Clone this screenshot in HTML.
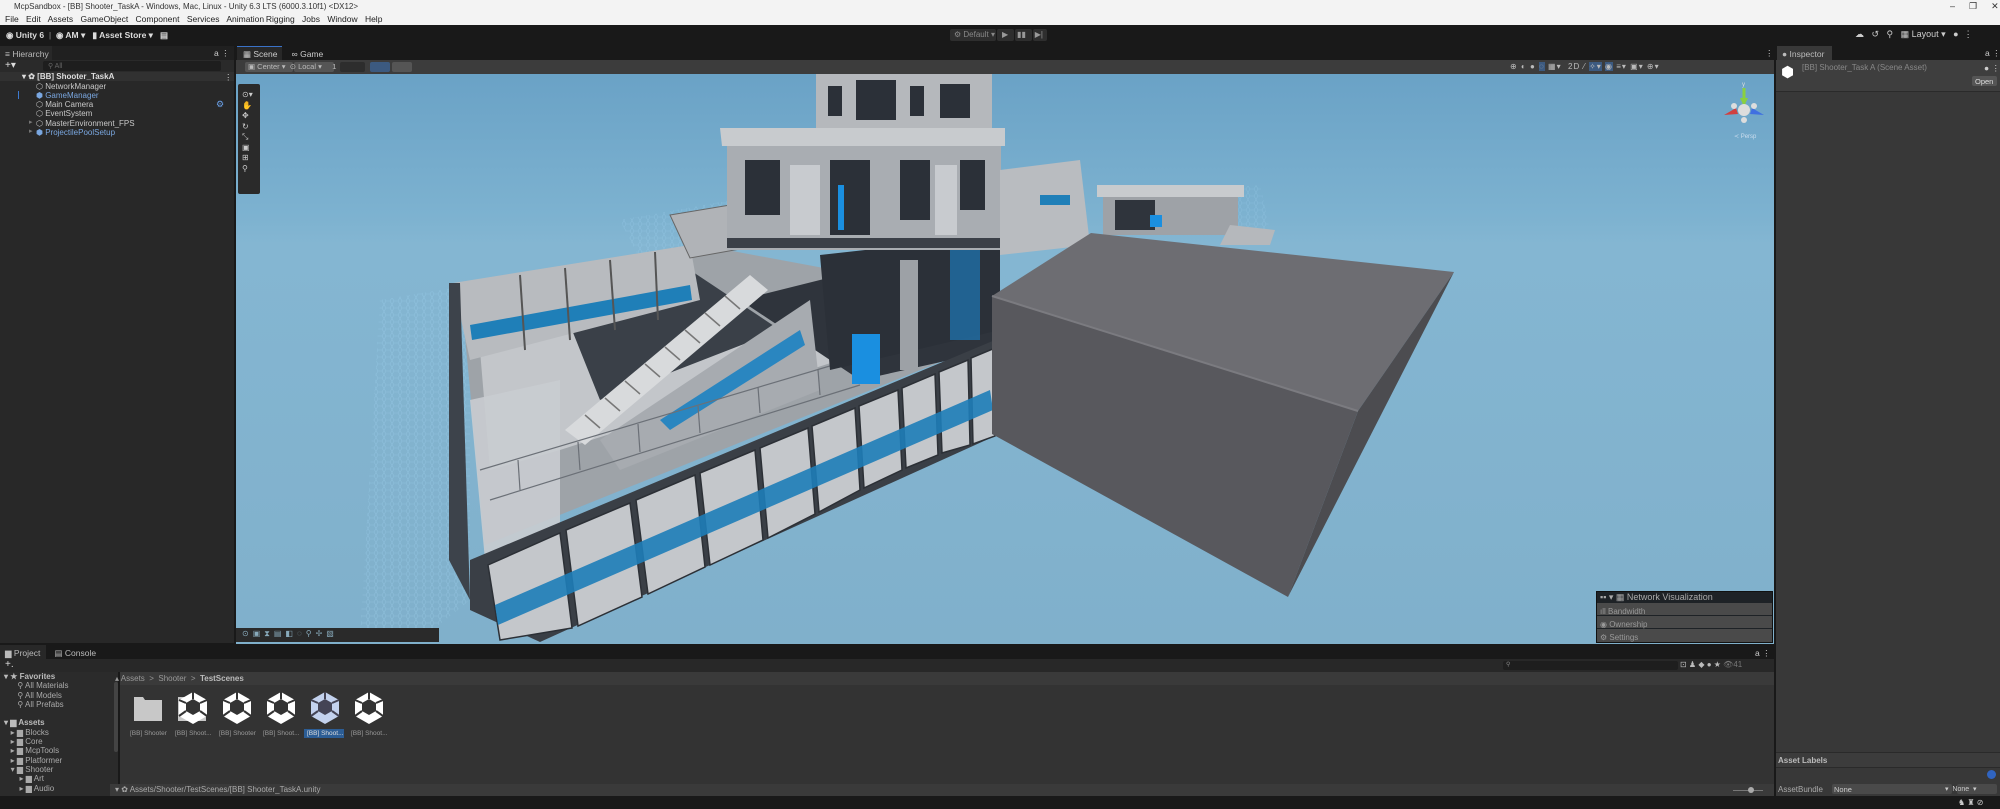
<!DOCTYPE html>
<html><head><meta charset="utf-8"><style>
*{margin:0;padding:0;box-sizing:border-box}
body{width:2000px;height:809px;overflow:hidden;background:#191919;font-family:"Liberation Sans",sans-serif;font-size:8.5px;color:#c4c4c4;position:relative}
.a{position:absolute}
.t{white-space:nowrap}
.btn{position:absolute;background:#3a3a3a;border-radius:2px}
</style></head><body>
<!-- title + menu -->
<div class="a" style="left:0;top:0;width:2000px;height:25px;background:#f3f3f3"></div>
<div class="a t" style="left:14px;top:2px;color:#333;font-size:8px">McpSandbox - [BB] Shooter_TaskA - Windows, Mac, Linux - Unity 6.3 LTS (6000.3.10f1) &lt;DX12&gt;</div>
<div class="a t" style="left:1950px;top:1px;color:#333;font-size:9px;letter-spacing:14px">–❐✕</div>
<div class="a t" style="left:5px;top:14px;color:#222;font-size:8.5px;word-spacing:5px">File Edit Assets GameObject Component Services <span>Animation&#8239;Rigging</span> Jobs Window Help</div>
<!-- main toolbar -->
<div class="a t" style="left:6px;top:30px;color:#ddd;font-weight:bold">◉ Unity 6 &nbsp;<span style="color:#666">|</span>&nbsp; ◉ AM ▾ &nbsp; ▮ Asset Store ▾ &nbsp; ▤</div>
<div class="btn" style="left:950px;top:29px;width:46px;height:12px;background:#2e2e2e"></div>
<div class="a t" style="left:954px;top:30px;color:#888;font-size:8px">⚙ Default ▾</div>
<div class="btn" style="left:997px;top:29px;width:17px;height:12px;background:#2e2e2e"></div>
<div class="btn" style="left:1015px;top:29px;width:17px;height:12px;background:#2e2e2e"></div>
<div class="btn" style="left:1033px;top:29px;width:14px;height:12px;background:#2e2e2e"></div>
<div class="a t" style="left:1002px;top:30px;color:#999;font-size:8px">▶ &nbsp;&nbsp; ▮▮ &nbsp;&nbsp; ▶|</div>
<div class="a t" style="left:1855px;top:29px;color:#ccc;font-size:9px">☁ &nbsp; ↺ &nbsp; ⚲ &nbsp; ▦ Layout ▾ &nbsp; ● &nbsp;⋮</div>
<!-- hierarchy -->
<div class="a" style="left:0;top:46px;width:234px;height:597px;background:#282828"></div>
<div class="a" style="left:0;top:46px;width:234px;height:14px;background:#202020"></div>
<div class="a" style="left:0;top:46px;width:52px;height:14px;background:#282828"></div>
<div class="a t" style="left:5px;top:49px;color:#bbb">≡ Hierarchy</div>
<div class="a t" style="left:214px;top:48px;color:#ccc">a ⋮</div>
<div class="a" style="left:0;top:60px;width:234px;height:12px;background:#2a2a2a"></div>
<div class="a t" style="left:5px;top:60px;color:#ddd;font-size:10px">+▾</div>
<div class="a" style="left:43px;top:61px;width:178px;height:10px;background:#1e1e1e;border-radius:2px"></div>
<div class="a t" style="left:48px;top:62px;color:#666;font-size:7px">⚲ All</div>
<div class="a" style="left:0;top:72px;width:234px;height:9px;background:#313131"></div>
<div class="a t" style="left:22px;top:72px;color:#ddd;font-weight:bold;font-size:8px">▾ ✿ [BB] Shooter_TaskA</div>
<div class="a t" style="left:224px;top:72px;color:#ccc">⋮</div>
<div class="a t" style="left:36px;top:81.5px;line-height:9.3px;font-size:8px;color:#c8c8c8">
⬡ NetworkManager<br><span style="color:#7aa7e0">⬢ GameManager</span><br>⬡ Main Camera<br>⬡ EventSystem<br>⬡ MasterEnvironment_FPS<br><span style="color:#7aa7e0">⬢ ProjectilePoolSetup</span></div>
<div class="a t" style="left:29px;top:118px;color:#777;font-size:7px;line-height:9.3px">▸<br>▸</div>
<div class="a" style="left:18px;top:91px;width:1px;height:8px;background:#3d7ad0"></div>
<div class="a t" style="left:216px;top:99px;color:#6aa0e8;font-size:9px">⚙</div>
<!-- scene panel -->
<div class="a" style="left:236px;top:46px;width:1538px;height:14px;background:#191919"></div>
<div class="a" style="left:237px;top:46px;width:45px;height:14px;background:#282828;border-top:1px solid #3a72c8"></div>
<div class="a t" style="left:243px;top:49px;color:#ccc">▦ Scene &nbsp;&nbsp;&nbsp;&nbsp; <span>∞ Game</span></div>
<div class="a t" style="left:1765px;top:48px;color:#ccc">⋮</div>
<div class="a" style="left:236px;top:60px;width:1538px;height:14px;background:#3c3c3c"></div>
<div class="btn" style="left:245px;top:62px;width:48px;height:10px;background:#555"></div>
<div class="btn" style="left:294px;top:62px;width:40px;height:10px;background:#555"></div>
<div class="btn" style="left:340px;top:62px;width:25px;height:10px;background:#2d2d2d"></div>
<div class="btn" style="left:370px;top:62px;width:20px;height:10px;background:#3c5a80"></div>
<div class="btn" style="left:392px;top:62px;width:20px;height:10px;background:#555"></div>
<div class="a t" style="left:248px;top:62px;color:#bbb;font-size:7.5px">▣ Center ▾ &nbsp;⊙ Local ▾ &nbsp;&nbsp;&nbsp; 1</div>
<div class="a t" style="left:1510px;top:62px;color:#bbb;font-size:8px;letter-spacing:1px">⊕ ◐ ● <span style="background:#3c5a80">◌</span> ▦▾ &nbsp;2D ⁄ <span style="background:#3c5a80">✧▾</span> <span style="background:#3c5a80">◉</span> ≡▾ ▣▾ ⊕▾</div>
<!-- viewport -->
<svg class="a" style="left:236px;top:74px" width="1538" height="570" viewBox="236 74 1538 570">
<defs>
<linearGradient id="sky" x1="0" y1="0" x2="0" y2="1">
<stop offset="0" stop-color="#6aa2c6"/><stop offset="0.25" stop-color="#7db2d0"/><stop offset="0.3" stop-color="#84b6d2"/><stop offset="1" stop-color="#80b0cb"/></linearGradient>
<pattern id="hex" width="8" height="7" patternUnits="userSpaceOnUse"><path d="M0 3.5 L2 0 H6 L8 3.5 L6 7 H2Z" fill="none" stroke="#9fd0ee" stroke-width="0.6" opacity="0.6"/></pattern>
</defs>
<rect x="236" y="74" width="1538" height="570" fill="url(#sky)"/>
<polygon points="380,300 470,285 470,600 420,640 360,640" fill="url(#hex)" opacity="0.7"/>
<polygon points="620,220 760,195 760,240 640,260" fill="url(#hex)" opacity="0.6"/>
<polygon points="1200,190 1260,185 1270,230 1210,235" fill="url(#hex)" opacity="0.5"/>
<!-- ground deck area -->
<polygon points="460,285 700,245 995,300 995,340 485,545" fill="#9ea3a8"/>
<polygon points="480,350 700,290 840,360 560,450 490,470" fill="#c3c6ca"/>
<polygon points="560,300 690,270 780,330 600,400" fill="#3a4048"/>
<polygon points="740,300 900,260 995,300 995,350 860,380" fill="#2f343c"/>
<!-- left wall -->
<polygon points="453,283 690,245 700,300 470,360" fill="#b8bbbf"/>
<polygon points="470,325 690,285 692,300 472,340" fill="#1f7fb8"/>
<g stroke="#555" stroke-width="2"><line x1="520" y1="275" x2="525" y2="350"/><line x1="565" y1="268" x2="570" y2="340"/><line x1="610" y1="260" x2="615" y2="330"/><line x1="655" y1="252" x2="658" y2="320"/></g>
<polygon points="449,283 460,283 470,600 449,560" fill="#3d434b"/>
<polygon points="470,400 560,380 560,560 485,560" fill="#c9ccd0" opacity="0.9"/>
<!-- stairs -->
<polygon points="565,430 750,275 768,290 585,445" fill="#d8dadc"/>
<g stroke="#777" stroke-width="1.5">
<line x1="585" y1="415" x2="600" y2="428"/><line x1="605" y1="398" x2="620" y2="411"/><line x1="625" y1="381" x2="640" y2="394"/><line x1="645" y1="364" x2="660" y2="377"/><line x1="665" y1="347" x2="680" y2="360"/><line x1="685" y1="330" x2="700" y2="343"/><line x1="705" y1="313" x2="720" y2="326"/><line x1="725" y1="296" x2="740" y2="309"/></g>
<polygon points="600,440 810,300 820,390 620,470" fill="#a7abb0"/>
<polygon points="660,420 800,330 805,345 670,430" fill="#2a86c0"/>
<!-- railings -->
<g stroke="#6b7077" stroke-width="1.2" fill="none">
<polyline points="480,470 850,360"/><polyline points="490,500 860,385"/>
<line x1="520" y1="490" x2="518" y2="460"/><line x1="580" y1="470" x2="578" y2="442"/><line x1="640" y1="452" x2="638" y2="424"/><line x1="700" y1="433" x2="698" y2="406"/><line x1="760" y1="413" x2="758" y2="387"/><line x1="820" y1="395" x2="818" y2="370"/>
</g>
<!-- front wall panels -->
<polygon points="470,560 995,340 995,436 540,642 470,610" fill="#3a3f46"/>
<g fill="#c4c7cb" stroke="#2c3036" stroke-width="1.5">
<polygon points="488,565 560,533 572,628 500,640"/>
<polygon points="566,530 630,503 642,597 578,626"/>
<polygon points="636,500 695,475 705,567 648,594"/>
<polygon points="700,473 755,450 763,540 710,565"/>
<polygon points="760,448 808,428 815,514 768,538"/>
<polygon points="812,426 855,408 860,490 819,512"/>
<polygon points="859,406 898,390 902,470 864,488"/>
<polygon points="902,388 935,374 938,455 906,468"/>
<polygon points="939,372 968,360 970,445 942,453"/>
<polygon points="971,358 995,348 995,436 973,444"/>
</g>
<polygon points="495,605 990,390 993,410 498,625" fill="#1e7db8" opacity="0.9"/>
<!-- dark interior + cube -->
<polygon points="820,255 1000,235 1000,330 830,370" fill="#2b3038"/>
<rect x="852" y="334" width="28" height="50" fill="#1a8fe0"/>
<rect x="900" y="260" width="18" height="110" fill="#9da1a6"/>
<rect x="950" y="250" width="30" height="90" fill="#1f6fa8" opacity="0.8"/>
<!-- balcony -->
<polygon points="670,215 760,200 790,240 690,258" fill="#b0b3b7" stroke="#666" stroke-width="1"/>
<!-- tower -->
<polygon points="720,128 1005,128 1005,146 722,146" fill="#c8cbce"/>
<rect x="727" y="146" width="274" height="104" fill="#a9adb2"/>
<g fill="#2b3038"><rect x="745" y="160" width="35" height="55"/><rect x="830" y="160" width="40" height="75"/><rect x="900" y="160" width="30" height="60"/><rect x="960" y="160" width="25" height="50"/></g>
<g fill="#c8cbcf"><rect x="790" y="165" width="30" height="70"/><rect x="935" y="165" width="22" height="70"/></g>
<rect x="727" y="238" width="274" height="10" fill="#3b4048"/>
<rect x="838" y="185" width="6" height="45" fill="#1a8fe0"/>
<!-- top small tower -->
<rect x="816" y="74" width="176" height="54" fill="#b5b8bc"/>
<g fill="#2b3038"><rect x="828" y="86" width="14" height="30"/><rect x="856" y="80" width="40" height="40"/><rect x="910" y="86" width="14" height="30"/><rect x="940" y="84" width="30" height="34"/></g>
<!-- back right stuff -->
<polygon points="1000,170 1080,160 1090,245 1000,255" fill="#b9bcc0"/>
<rect x="1040" y="195" width="30" height="10" fill="#1f7fb8"/>
<rect x="1097" y="185" width="147" height="12" fill="#c8cbce"/>
<rect x="1103" y="197" width="135" height="38" fill="#9ea2a7"/>
<rect x="1115" y="200" width="40" height="30" fill="#2f343c"/>
<rect x="1150" y="215" width="12" height="12" fill="#1a8fe0"/>
<polygon points="1230,225 1275,230 1270,245 1220,245" fill="#b5b8bc"/>
<!-- big box -->
<polygon points="992,296 1091,233 1454,272 1358,411" fill="#6d6d72"/>
<polygon points="992,296 1358,411 1288,597 992,434" fill="#58585d"/>
<polygon points="1358,411 1454,272 1288,597" fill="#4c4c50"/>
<line x1="992" y1="296" x2="1358" y2="411" stroke="#7b7b80" stroke-width="2"/>
<!-- gizmo -->
<g transform="translate(1744,110)">
<line x1="0" y1="-22" x2="0" y2="0" stroke="#8ad040" stroke-width="3"/>
<polygon points="-4,-12 4,-12 0,-4" fill="#8ad040"/>
<polygon points="-20,5 -8,-2 -6,4" fill="#d04040"/>
<polygon points="20,5 8,-2 6,4" fill="#4070e0"/>
<circle cx="0" cy="0" r="6" fill="#ddd"/><circle cx="0" cy="10" r="3" fill="#ddd"/><circle cx="-10" cy="-4" r="3" fill="#ddd"/><circle cx="10" cy="-4" r="3" fill="#ddd"/>
<text x="-2" y="-24" font-size="6" fill="#ddd" font-family="Liberation Sans">y</text>
<text x="-10" y="28" font-size="6" fill="#cde" font-family="Liberation Sans">≺ Persp</text>
</g>
</svg>
<!-- tools overlay -->
<div class="a" style="left:238px;top:84px;width:22px;height:110px;background:#2a2a2a;border-radius:2px"></div>
<div class="a t" style="left:242px;top:90px;color:#ccc;font-size:8px;line-height:10.5px">⊙▾<br>✋<br>✥<br>↻<br>⤡<br>▣<br>⊞<br>⚲</div>
<div class="a" style="left:236px;top:628px;width:203px;height:14px;background:#2a2a2a"></div>
<div class="a t" style="left:242px;top:629px;color:#8ab;font-size:8px;letter-spacing:4px">⊙▣⧗▤◧◌⚲✢▧</div>
<!-- network viz -->
<div class="a" style="left:1596px;top:591px;width:177px;height:52px;background:#1e2226;border:1px solid #111"></div>
<div class="a t" style="left:1600px;top:592px;color:#aaa;font-size:9px">▪▪ ▾ ▦ Network Visualization</div>
<div class="a" style="left:1597px;top:603px;width:175px;height:12px;background:#4a4a4a"></div>
<div class="a" style="left:1597px;top:616px;width:175px;height:12px;background:#4a4a4a"></div>
<div class="a" style="left:1597px;top:629px;width:175px;height:13px;background:#4a4a4a"></div>
<div class="a t" style="left:1600px;top:605px;color:#999;font-size:8px;line-height:13px">ıll Bandwidth<br>◉ Ownership<br>⚙ Settings</div>
<!-- inspector -->
<div class="a" style="left:1776px;top:46px;width:224px;height:750px;background:#383838"></div>
<div class="a" style="left:1776px;top:46px;width:224px;height:14px;background:#191919"></div>
<div class="a" style="left:1777px;top:46px;width:55px;height:14px;background:#383838"></div>
<div class="a t" style="left:1782px;top:49px;color:#bbb">● Inspector</div>
<div class="a t" style="left:1985px;top:48px;color:#ccc">a ⋮</div>
<div class="a" style="left:1776px;top:60px;width:224px;height:32px;background:#3e3e3e;border-bottom:1px solid #2a2a2a"></div>
<div class="a t" style="left:1781px;top:63px;color:#fff;font-size:15px">⬢</div>
<div class="a t" style="left:1802px;top:63px;color:#888;font-size:8px">[BB] Shooter_Task A (Scene Asset)</div>
<div class="a t" style="left:1984px;top:63px;color:#ccc">● ⋮</div>
<div class="btn" style="left:1972px;top:76px;width:25px;height:10px;background:#555"></div>
<div class="a t" style="left:1975px;top:77px;color:#ddd;font-size:7.5px">Open</div>
<div class="a" style="left:1776px;top:752px;width:224px;height:16px;background:#3c3c3c;border-top:1px solid #2a2a2a;border-bottom:1px solid #2a2a2a"></div>
<div class="a t" style="left:1778px;top:756px;color:#bbb;font-weight:bold;font-size:8px">Asset Labels</div>
<div class="a" style="left:1987px;top:770px;width:9px;height:9px;border-radius:50%;background:#3064c0"></div>
<div class="a t" style="left:1778px;top:785px;color:#aaa;font-size:8px">AssetBundle</div>
<div class="btn" style="left:1832px;top:784px;width:120px;height:10px;background:#4a4a4a"></div>
<div class="btn" style="left:1957px;top:784px;width:40px;height:10px;background:#4a4a4a"></div>
<div class="a t" style="left:1834px;top:785px;color:#ccc;font-size:7.5px">None</div>
<div class="a t" style="left:1945px;top:785px;color:#ccc;font-size:7px">▾ &nbsp;None&nbsp;&nbsp;▾</div>
<!-- project -->
<div class="a" style="left:0;top:645px;width:1774px;height:14px;background:#191919"></div>
<div class="a" style="left:0;top:645px;width:46px;height:14px;background:#282828"></div>
<div class="a t" style="left:5px;top:648px;color:#bbb">▆ Project &nbsp;&nbsp;&nbsp;&nbsp; ▤ Console</div>
<div class="a t" style="left:1755px;top:648px;color:#ccc">a ⋮</div>
<div class="a" style="left:0;top:659px;width:1774px;height:13px;background:#282828"></div>
<div class="a t" style="left:5px;top:659px;color:#ddd;font-size:10px">+.</div>
<div class="a" style="left:1503px;top:661px;width:175px;height:9px;background:#1e1e1e;border-radius:2px"></div>
<div class="a t" style="left:1506px;top:661px;color:#888;font-size:6px">⚲</div>
<div class="a t" style="left:1680px;top:660px;color:#bbb;font-size:8px">⊡ ♟ ◆ ● ★ <span style="color:#777">👁41</span></div>
<div class="a" style="left:0;top:672px;width:118px;height:124px;background:#2b2b2b"></div>
<div class="a" style="left:114px;top:682px;width:4px;height:70px;background:#444;border-radius:2px"></div>
<div class="a t" style="left:4px;top:672px;color:#bbb;font-size:8px;line-height:9.3px;font-weight:bold">▾ ★ Favorites<br><span style="font-weight:normal;color:#aaa">&nbsp;&nbsp;&nbsp;&nbsp;&nbsp;&nbsp;⚲ All Materials<br>&nbsp;&nbsp;&nbsp;&nbsp;&nbsp;&nbsp;⚲ All Models<br>&nbsp;&nbsp;&nbsp;&nbsp;&nbsp;&nbsp;⚲ All Prefabs</span><br><br>▾ ▆ Assets<br><span style="font-weight:normal;color:#aaa">&nbsp;&nbsp;&nbsp;▸ ▆ Blocks<br>&nbsp;&nbsp;&nbsp;▸ ▆ Core<br>&nbsp;&nbsp;&nbsp;▸ ▆ McpTools<br>&nbsp;&nbsp;&nbsp;▸ ▆ Platformer<br>&nbsp;&nbsp;&nbsp;▾ ▆ Shooter<br>&nbsp;&nbsp;&nbsp;&nbsp;&nbsp;&nbsp;&nbsp;▸ ▆ Art<br>&nbsp;&nbsp;&nbsp;&nbsp;&nbsp;&nbsp;&nbsp;▸ ▆ Audio</span></div>
<div class="a" style="left:120px;top:672px;width:1654px;height:112px;background:#333"></div>
<div class="a" style="left:120px;top:672px;width:1654px;height:13px;background:#3a3a3a"></div>
<div class="a t" style="left:115px;top:674px;color:#999;font-size:8px">▴ Assets &nbsp;&gt;&nbsp; Shooter &nbsp;&gt;&nbsp; <b style="color:#bbb">TestScenes</b></div>
<svg class="a" style="left:120px;top:685px" width="280" height="55" viewBox="120 685 280 55">
<g fill="#c8c8c8"><path d="M134 697h9l2 3h17v21h-28z"/><path d="M178 697h9l2 3h17v21h-28z"/></g>
<g id="u"><path d="M237 692l14 8v16l-14 8-14-8v-16z" fill="#fff"/><path d="M237 699l7 4v8l-7 4-7-4v-8z" fill="#333"/><path d="M237 692v7M223 700l7 3M251 700l-7 3M230 711l-7 5M244 711l7 5" stroke="#333" stroke-width="2"/></g>
<use href="#u" x="-44"/><use href="#u" x="44"/><use href="#u" x="132"/>
<g transform="translate(88,0)"><path d="M237 692l14 8v16l-14 8-14-8v-16z" fill="#c3d2ee"/><path d="M237 699l7 4v8l-7 4-7-4v-8z" fill="#445"/><path d="M237 692v7M223 700l7 3M251 700l-7 3M230 711l-7 5M244 711l7 5" stroke="#445" stroke-width="2"/></g>
</svg>
<div class="a" style="left:304px;top:729px;width:40px;height:9px;background:#2c5d95"></div>
<div class="a t" style="left:130px;top:730px;color:#999;font-size:6.5px;word-spacing:0">[BB] Shooter</div>
<div class="a t" style="left:175px;top:730px;color:#999;font-size:6.5px">[BB] Shoot...</div>
<div class="a t" style="left:219px;top:730px;color:#999;font-size:6.5px">[BB] Shooter</div>
<div class="a t" style="left:263px;top:730px;color:#999;font-size:6.5px">[BB] Shoot...</div>
<div class="a t" style="left:307px;top:730px;color:#ddd;font-size:6.5px">[BB] Shoot...</div>
<div class="a t" style="left:351px;top:730px;color:#999;font-size:6.5px">[BB] Shoot...</div>
<div class="a" style="left:110px;top:784px;width:1664px;height:12px;background:#3a3a3a"></div>
<div class="a t" style="left:115px;top:785px;color:#aaa;font-size:8px">▾ ✿ Assets/Shooter/TestScenes/[BB] Shooter_TaskA.unity</div>
<div class="a" style="left:1733px;top:790px;width:30px;height:1px;background:#777"></div>
<div class="a" style="left:1748px;top:787px;width:6px;height:6px;border-radius:50%;background:#aaa"></div>
<div class="a t" style="left:1958px;top:798px;color:#ccc;font-size:8px">♞ ♜ ⊘</div>
</body></html>
